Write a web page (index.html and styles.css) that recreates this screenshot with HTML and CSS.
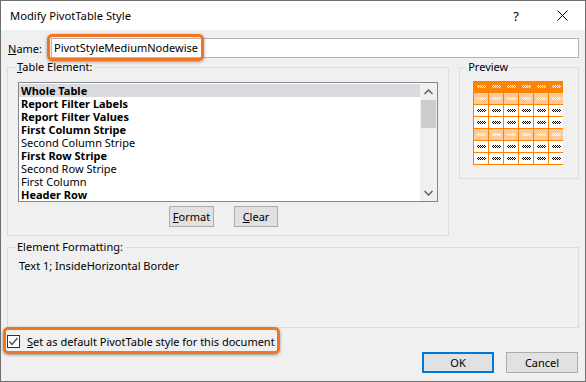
FILE: index.html
```html
<!DOCTYPE html>
<html lang="en">
<head>
    <meta charset="UTF-8">
    <title>Modify PivotTable Style</title>
    <link rel="stylesheet" href="styles.css">
</head>
<body>
    <div class="window">
        <div class="titlebar">
            <span class="title">Modify PivotTable Style</span>
            <span class="caption-btn">?</span>
            <span class="caption-btn">
                <svg width="11" height="11" viewBox="0 0 11 11"><path d="M0.5 0.5L10.5 10.5M10.5 0.5L0.5 10.5" stroke="#000" stroke-width="1"/></svg>
            </span>
        </div>

        <div class="dialog">
            <div class="name-row">
                <label class="name-label"><u>N</u>ame:</label>
                <div class="name-field">PivotStyleMediumNodewise</div>
                <span class="callout name-callout"></span>
            </div>

            <div class="top-groups">
                <fieldset class="group table-element">
                    <legend><u>T</u>able Element:</legend>
                    <div class="listbox">
                        <ul class="items">
                            <li class="bold selected">Whole Table</li>
                            <li class="bold">Report Filter Labels</li>
                            <li class="bold">Report Filter Values</li>
                            <li class="bold">First Column Stripe</li>
                            <li>Second Column Stripe</li>
                            <li class="bold">First Row Stripe</li>
                            <li>Second Row Stripe</li>
                            <li>First Column</li>
                            <li class="bold">Header Row</li>
                        </ul>
                        <div class="scrollbar">
                            <div class="sb-btn">
                                <svg width="9" height="6" viewBox="0 0 9 6"><path d="M0.5 5L4.5 1L8.5 5" fill="none" stroke="#606060" stroke-width="1.5"/></svg>
                            </div>
                            <div class="sb-thumb"></div>
                            <div class="sb-space"></div>
                            <div class="sb-btn">
                                <svg width="9" height="6" viewBox="0 0 9 6"><path d="M0.5 1L4.5 5L8.5 1" fill="none" stroke="#606060" stroke-width="1.5"/></svg>
                            </div>
                        </div>
                    </div>
                    <div class="list-buttons">
                        <button class="btn format"><u>F</u>ormat</button>
                        <button class="btn clear"><u>C</u>lear</button>
                    </div>
                </fieldset>

                <fieldset class="group preview">
                    <legend>Preview</legend>
                    <div class="preview-table" id="previewTable"></div>
                </fieldset>
            </div>

            <fieldset class="group element-formatting">
                <legend>Element Formatting:</legend>
                <p class="format-text">Text 1; InsideHorizontal Border</p>
            </fieldset>

            <div class="default-row">
                <span class="checkbox">
                    <svg width="11" height="11" viewBox="0 0 11 11"><path d="M1.5 5.5L4 8.5L9.5 2" fill="none" stroke="#4a4a4a" stroke-width="1.3"/></svg>
                </span>
                <label class="default-label"><u>S</u>et as default PivotTable style for this document</label>
                <span class="callout default-callout"></span>
            </div>

            <div class="dialog-buttons">
                <button class="btn wide ok">OK</button>
                <button class="btn wide">Cancel</button>
            </div>
        </div>
    </div>

    <script>
        // preview grid: header row, then banded rows
        var rowTypes = ['head', 'band', 'plain', 'plain', 'band', 'plain', 'plain'];
        var table = document.getElementById('previewTable');
        rowTypes.forEach(function (type) {
            for (var c = 0; c < 6; c++) {
                var cell = document.createElement('div');
                cell.className = 'cell ' + type;
                cell.innerHTML = '<span class="mark"></span>';
                table.appendChild(cell);
            }
        });
    </script>
</body>
</html>
```

FILE: styles.css
```css
* {
    box-sizing: border-box;
}

body {
    margin: 0;
    background: #fff;
    font-family: "Noto Sans", sans-serif;
    font-size: 11px;
    color: #000;
}

.window {
    width: 586px;
    height: 382px;
    border: 1px solid #6f6f6f;
    background: #f0f0f0;
    display: flex;
    flex-direction: column;
}

.titlebar {
    height: 29px;
    background: #fff;
    display: flex;
    align-items: center;
}

.title {
    flex: 1;
    padding-left: 9px;
    font-size: 11.2px;
}

.caption-btn {
    width: 46px;
    height: 29px;
    display: flex;
    align-items: center;
    justify-content: center;
    font-size: 13px;
}

.dialog {
    flex: 1;
    padding: 8px 6px 0;
}

/* name row */
.name-row {
    display: flex;
    align-items: center;
    height: 20px;
    position: relative;
}

.name-label {
    width: 44px;
    padding-left: 1px;
}

.name-field {
    flex: 1;
    height: 20px;
    border: 1px solid #b4b4b4;
    background: #fff;
    padding-left: 2px;
    line-height: 18px;
}

.callout {
    position: absolute;
    border: 3px solid #f27522;
    border-radius: 5px;
    box-shadow: 0 1px 3px rgba(0, 0, 0, 0.4);
}

.name-callout {
    left: 40px;
    top: -4px;
    width: 157px;
    height: 27px;
}

/* group boxes */
.top-groups {
    display: flex;
    align-items: flex-start;
    gap: 10px;
    margin-top: 2px;
}

.group {
    margin: 0;
    border: 1px solid #dcdcdc;
    min-width: 0;
}

.group legend {
    padding: 0 2px;
    line-height: 14px;
    height: 14px;
}

.table-element {
    width: 443px;
    padding: 8px 10px 8px 10px;
}

.table-element legend {
    margin-left: -3px;
}

.listbox {
    height: 120px;
    border: 1px solid #828790;
    background: #fff;
    display: flex;
}

.items {
    flex: 1;
    list-style: none;
    margin: 0;
    padding: 1px 0 0;
    overflow: hidden;
}

.items li {
    height: 13px;
    line-height: 13px;
    padding-left: 2px;
    white-space: nowrap;
}

.items .bold {
    font-weight: bold;
}

.items .selected {
    background: #dadadf;
}

.scrollbar {
    width: 17px;
    background: #f0f0f0;
    display: flex;
    flex-direction: column;
}

.sb-btn {
    height: 17px;
    display: flex;
    align-items: center;
    justify-content: center;
}

.sb-thumb {
    height: 28px;
    margin: 0 1px;
    background: #cdcdcd;
}

.sb-space {
    flex: 1;
}

.list-buttons {
    display: flex;
    gap: 20px;
    margin-top: 4px;
    padding-left: 151px;
}

.btn {
    height: 21px;
    padding: 0;
    border: 1px solid #adadad;
    background: #e1e1e1;
    font-family: inherit;
    font-size: 11px;
    color: #000;
}

.format { width: 45px; }
.clear { width: 44px; }

/* preview */
.preview {
    width: 120px;
    padding: 7px 0 13px 13px;
}

.preview legend {
    margin-left: -7px;
}

.preview-table {
    width: 90px;
    display: grid;
    grid-template-columns: repeat(6, 14px);
    grid-auto-rows: 11px;
    gap: 1px;
    padding: 0 0 1px 1px;
    background: #ff8200;
}

.cell {
    display: flex;
    align-items: center;
    justify-content: center;
}

.cell.head { background: #ff8200; color: #fff; }
.cell.band { background: #fdca98; color: #fff; }
.cell.plain { background: #fff; color: #000; }

.mark {
    width: 9px;
    height: 3px;
    background: repeating-conic-gradient(currentColor 0 25%, transparent 0 50%) 0 0 / 2px 2px;
}

/* element formatting */
.element-formatting {
    margin-top: 4px;
    padding: 5px 10px 54px 11px;
}

.element-formatting legend {
    margin-left: -4px;
}

.format-text {
    margin: 0;
    line-height: 14px;
}

/* default checkbox + buttons */
.default-row {
    display: flex;
    align-items: center;
    height: 13px;
    margin-top: 7px;
    position: relative;
}

.checkbox {
    width: 13px;
    height: 13px;
    border: 1px solid #333;
    background: #fff;
    display: flex;
    align-items: center;
    justify-content: center;
}

.default-label {
    margin-left: 7px;
}

.default-callout {
    left: -4px;
    top: -8px;
    width: 277px;
    height: 27px;
}

.dialog-buttons {
    display: flex;
    justify-content: flex-end;
    gap: 12px;
    margin-top: 4px;
    margin-right: 1px;
}

.wide {
    width: 72px;
}

.ok {
    border: 2px solid #0078d7;
}
```
